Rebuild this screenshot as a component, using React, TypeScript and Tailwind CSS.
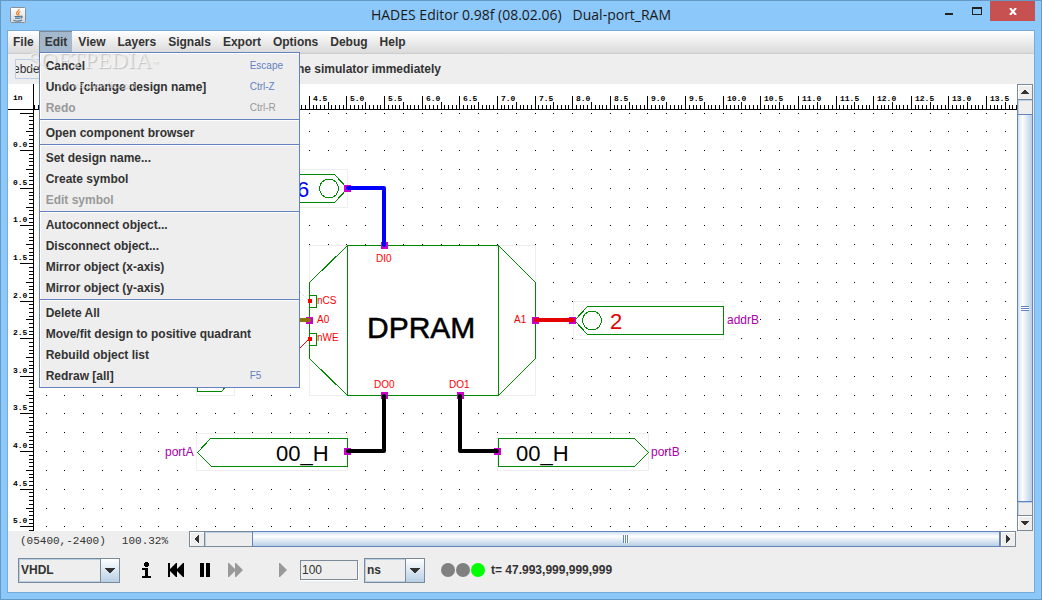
import type { ReactNode } from "react";

const MENUS = ["File", "Edit", "View", "Layers", "Signals", "Export", "Options", "Debug", "Help"];

type Item = { label: string; accel?: string; disabled?: boolean };

const EDIT_GROUPS: Item[][] = [
  [
    { label: "Cancel", accel: "Escape" },
    { label: "Undo [change design name]", accel: "Ctrl-Z" },
    { label: "Redo", accel: "Ctrl-R", disabled: true },
  ],
  [{ label: "Open component browser" }],
  [{ label: "Set design name..." }, { label: "Create symbol" }, { label: "Edit symbol", disabled: true }],
  [
    { label: "Autoconnect object..." },
    { label: "Disconnect object..." },
    { label: "Mirror object (x-axis)" },
    { label: "Mirror object (y-axis)" },
  ],
  [
    { label: "Delete All" },
    { label: "Move/fit design to positive quadrant" },
    { label: "Rebuild object list" },
    { label: "Redraw [all]", accel: "F5" },
  ],
];

/* Pixels per inch of the design, and the pixel of the origin. */
const UNIT = 75.24;
const px = (v: number) => Math.floor(309.35 + (v - 4.5) * UNIT);
const py = (v: number) => Math.floor(150.65 + v * UNIT);

function rulerTicks() {
  let minor = "";
  for (let i = 17; i < 600; i++) {
    const x = px(i / 20) + 0.5;
    if (x < 34) continue;
    minor += `M${x} ${i % 10 === 0 ? 96 : i % 5 === 0 ? 102 : 105}V109`;
  }
  for (let i = -10; i < 400; i++) {
    const y = py(i / 20) + 0.5;
    minor += `M${i % 10 === 0 ? 20 : i % 5 === 0 ? 26 : 29} ${y}H33`;
  }
  return minor;
}

function gridDots() {
  let d = "";
  for (let j = -2; j < 80; j++) for (let i = 4; i < 120; i++) d += `M${px(i / 4)} ${py(j / 4)}h1v1h-1z`;
  return d;
}

const TICKS = rulerTicks();
const DOTS = gridDots();
const H_LABELS = Array.from({ length: 26 }, (_, i) => 1 + i / 2);
const V_LABELS = Array.from({ length: 11 }, (_, i) => i / 2);

function Pin({ x, y }: { x: number; y: number }) {
  return <rect x={x - 3} y={y - 3} width="7" height="7" fill="#cc00cc" />;
}

function Schematic() {
  return (
    <svg className="min-w-0 flex-1 bg-white font-normal" role="img" aria-label="Dual-port_RAM schematic" fontFamily="'Liberation Sans', Arial, sans-serif">
      <g transform="translate(-8 -84)">
        <path d={DOTS} fill="#000" shapeRendering="crispEdges" />
        <path d={TICKS} stroke="#000" shapeRendering="crispEdges" />
        <path d="M8 109.5H3000M33.5 84V3000" stroke="#000" shapeRendering="crispEdges" />
        <g fontFamily="'Liberation Mono', monospace" fontSize="8" fontWeight="700">
          <text x="13" y="100">in</text>
          {H_LABELS.map((v) => (
            <text key={v} x={px(v) + 4} y="101">{v.toFixed(1)}</text>
          ))}
          {V_LABELS.map((v) => (
            <text key={v} x="13" y={py(v) - 3}>{v.toFixed(1)}</text>
          ))}
        </g>

        <g fill="#fff" stroke="#eee" shapeRendering="crispEdges">
          <rect x="196.5" y="169.5" width="151" height="38" />
          <rect x="196.5" y="357.5" width="38" height="38" />
          <rect x="309.5" y="245.5" width="226" height="150" />
          <rect x="573.5" y="301.5" width="150" height="38" />
          <rect x="196.5" y="433.5" width="151" height="37" />
          <rect x="497.5" y="433.5" width="151" height="37" />
        </g>

        <g fill="none" stroke="#008800" shapeRendering="crispEdges">
          <path d="M197.5 174.5H334.5L347.5 188.5L334.5 202.5H197.5z" />
          <path d="M197.5 362.5V391.5H221.5L234.5 376.5L221.5 362.5z" />
          <path d="M347.5 245.5H498.5V395.5H347.5z" />
          <path d="M347.5 245.5L309.5 282.5V358.5L347.5 395.5M498.5 245.5L535.5 282.5V358.5L498.5 395.5" />
          <path d="M309.5 295.5H316.5V307.5H309.5M309.5 333.5H316.5V345.5H309.5" />
          <path d="M574.5 320.5L587.5 306.5H723.5V334.5H587.5z" />
          <path d="M197.5 452.5L210.5 438.5H347.5V466.5H211.5z" />
          <path d="M498.5 438.5H634.5L648.5 452.5L634.5 466.5H498.5z" />
          <circle cx="329" cy="188.5" r="9.5" />
          <circle cx="592" cy="320.5" r="9.5" />
        </g>

        <path d="M299 291L309 301" stroke="#ccc" strokeDasharray="1 1" />
        <path d="M299 349L309 339" stroke="#e60000" shapeRendering="crispEdges" />

        <Pin x={347} y={188} />
        <Pin x={384} y={245} />
        <Pin x={309} y={320} />
        <Pin x={535} y={320} />
        <Pin x={572} y={320} />
        <Pin x={384} y={395} />
        <Pin x={460} y={395} />
        <Pin x={347} y={451} />
        <Pin x={497} y={451} />
        <path d="M308 299h4v4h-4zM308 337h4v4h-4z" fill="#f00" shapeRendering="crispEdges" />

        <g fill="none" strokeWidth="4" strokeLinecap="round" strokeLinejoin="round">
          <path d="M348 188H384V245" stroke="#0000ff" />
          <path d="M280 320H309" stroke="#8f7300" />
          <path d="M536 320H573" stroke="#e60000" />
          <path d="M384 396V451H348M460 396V451H497" stroke="#000" />
        </g>

        <g fill="#f00" fontSize="10">
          <text x="376" y="262">DI0</text>
          <text x="317" y="304">nCS</text>
          <text x="317" y="323">A0</text>
          <text x="317" y="341">nWE</text>
          <text x="514" y="323">A1</text>
          <text x="374" y="388">DO0</text>
          <text x="449" y="388">DO1</text>
        </g>
        <g fill="#aa00aa" fontSize="12">
          <text x="727" y="324">addrB</text>
          <text x="165" y="456">portA</text>
          <text x="651" y="456">portB</text>
        </g>
        <text x="367" y="338" fontSize="30" stroke="#000" strokeWidth="0.500">DPRAM</text>
        <g fontSize="22">
          <text x="297" y="197" fill="#0000ff">6</text>
          <text x="610" y="329" fill="#e60000">2</text>
          <text x="276" y="461">00_H</text>
          <text x="516" y="461">00_H</text>
        </g>
      </g>
    </svg>
  );
}

function JavaIcon() {
  return (
    <svg className="size-4" viewBox="0 0 16 16" aria-hidden="true">
      <defs>
        <linearGradient id="cup" x1="0" y1="0" x2="0" y2="1">
          <stop offset="0" stopColor="#fff" />
          <stop offset="1" stopColor="#d4d8dc" />
        </linearGradient>
      </defs>
      <rect x="0.5" y="0.5" width="15" height="15" rx="1" fill="url(#cup)" stroke="#8b8f94" />
      <path d="M9 2C9.500 4 6 4.500 6.500 6.500C6.700 7.500 7.500 7.500 7.800 8.500M10.500 4.500C8.500 5.200 8.200 6.200 8.800 7C9.300 7.700 8.800 8.200 8.500 8.500" fill="none" stroke="#e8812a" strokeWidth="1.200" />
      <path d="M4.500 9.500H10.500M5 11.200H10M10.500 9.300C12.800 8.500 12.500 11 10.500 11.200M3.500 13.300C6 14.300 10 14.200 12 13" fill="none" stroke="#4d7896" strokeWidth="1.200" />
    </svg>
  );
}

function TitleBar() {
  return (
    <header className="flex h-[29px] shrink-0 items-start">
      <div className="flex w-[135px] pl-[3px] pt-[6px]">
        <JavaIcon />
      </div>
      <h1 className="flex-1 whitespace-pre pt-1 text-center font-['Open_Sans',sans-serif] text-sm font-normal leading-5 text-[#1a1a1a]">
        {"HADES Editor 0.98f (08.02.06)   Dual-port_RAM"}
      </h1>
      <div className="flex w-[135px] justify-end">
        <button type="button" aria-label="Minimize" className="flex h-5 w-[28px] items-start justify-center pt-3">
          <svg className="h-[2px] w-2"><path d="M0 0h8v2H0z" fill="#222" /></svg>
        </button>
        <button type="button" aria-label="Maximize" className="flex h-5 w-[27px] items-start justify-center pt-[6px]">
          <svg className="h-2 w-[10px]" shapeRendering="crispEdges">
            <path d="M0 0h10v8H0zM1 2v5h8V2z" fill="#222" fillRule="evenodd" />
          </svg>
        </button>
        <button type="button" aria-label="Close" className="flex h-5 w-[45px] items-center justify-center bg-[#c75050]">
          <svg className="h-[7px] w-2" viewBox="0 0 8 7"><path d="M1 0L7 7M7 0L1 7" stroke="#fff" strokeWidth="2" /></svg>
        </button>
      </div>
    </header>
  );
}

function EditMenu() {
  return (
    <div role="menu" aria-label="Edit" className="absolute left-0 top-full z-10 w-[261px] border border-[#6382bf] bg-[#eee] pb-px pt-[2px] shadow-[inset_1px_1px_0_#fff]">
      {EDIT_GROUPS.map((group, g) => (
        <div key={g}>
          {g > 0 && (
            <div role="separator" className="py-px">
              <div className="h-[2px] border-t border-[#6382bf] bg-white" />
            </div>
          )}
          {group.map((item) => (
            <button
              key={item.label}
              type="button"
              role="menuitem"
              disabled={item.disabled}
              className="flex h-[21px] w-full items-center justify-between pl-[6px] text-left text-[#333] disabled:text-[#999]"
            >
              <span>{item.label}</span>
              {item.accel && (
                <span className={item.disabled ? "w-[49px] text-[10px] font-normal text-[#999]" : "w-[49px] text-[10px] font-normal text-[#6382bf]"}>
                  {item.accel}
                </span>
              )}
            </button>
          ))}
        </div>
      ))}
    </div>
  );
}

function MenuBar() {
  return (
    <nav className="flex h-[23px] shrink-0 items-start border-b border-[#ccc] bg-linear-to-b from-white to-[#dadada]">
      {MENUS.map((name) => (
        <div key={name} className="relative">
          <button
            type="button"
            className={
              name === "Edit"
                ? "h-[21px] border-l border-t border-[#7a8a99] bg-[#a3b8cc] px-[5px]"
                : name === "File"
                  ? "h-[21px] border-t border-transparent px-[5px]"
                  : "h-[21px] border-t border-transparent px-[6px]"
            }
          >
            {name}
          </button>
          {name === "Edit" && <EditMenu />}
        </div>
      ))}
    </nav>
  );
}

const ARROWS = {
  up: "M4 0h1v1h1v1h1v1h1v1H0V3h1V2h1V1h1V0z",
  down: "M0 0h8v1H7v1H6v1H5v1H3V3H2V2H1V1H0z",
  left: "M3 0h1v8H3V7H2V6H1V5H0V3h1V2h1V1h1z",
  right: "M0 0h1v1h1v1h1v1h1v2H3v1H2v1H1v1H0z",
};

function ArrowButton({ dir }: { dir: keyof typeof ARROWS }) {
  const tall = dir === "left" || dir === "right";
  return (
    <button type="button" aria-label={`Scroll ${dir}`} className="flex size-4 shrink-0 items-center justify-center border border-[#7a8a99] bg-[#eee] shadow-[inset_1px_1px_0_#fff]">
      <svg className={tall ? "h-2 w-1" : "h-1 w-2"} shapeRendering="crispEdges">
        <path d={ARROWS[dir]} fill="#333" />
      </svg>
    </button>
  );
}

function VerticalBar() {
  return (
    <div className="flex w-4 shrink-0 flex-col">
      <ArrowButton dir="up" />
      <div className="flex-[14] border-x border-[#7a8a99] bg-[#eee] shadow-[inset_1px_1px_0_#b8cfe5]" />
      <div className="flex flex-[387] items-center justify-center border border-[#6382bf] bg-linear-to-r from-[#cddeee] via-white via-30% to-[#b8cfe5]">
        <div className="h-[5px] w-2 bg-[repeating-linear-gradient(#6382bf_0_1px,#fff_1px_2px)]" />
      </div>
      <div className="flex-[13] border-x border-[#7a8a99] bg-[#eee] shadow-[inset_1px_1px_0_#b8cfe5]" />
      <ArrowButton dir="down" />
    </div>
  );
}

function HorizontalBar() {
  return (
    <div className="flex h-4 min-w-0 flex-1">
      <ArrowButton dir="left" />
      <div className="flex-[47] border-y border-[#7a8a99] bg-[#eee] shadow-[inset_1px_1px_0_#b8cfe5]" />
      <div className="flex flex-[749] items-center justify-center border border-[#6382bf] bg-linear-to-b from-[#cddeee] via-white via-30% to-[#b8cfe5]">
        <div className="h-2 w-[6px] bg-[repeating-linear-gradient(90deg,#6382bf_0_1px,#fff_1px_2px)]" />
      </div>
      <ArrowButton dir="right" />
    </div>
  );
}

function Combo({ label, value, width }: { label: string; value: string; width: string }) {
  return (
    <div className={`relative h-[25px] ${width}`}>
      <select aria-label={label} defaultValue={value} className="size-full appearance-none border border-[#7a8a99] bg-[#eee] pl-[2px] font-bold text-[#333] shadow-[inset_0_0_0_1px_#b8cfe5]">
        <option>{value}</option>
      </select>
      <span className="pointer-events-none absolute inset-y-0 right-0 flex w-5 items-center justify-center border border-[#7a8a99] bg-linear-to-b from-white to-[#b8cfe5]">
        <svg className="h-[5px] w-[10px]" shapeRendering="crispEdges">
          <path d="M0 0h10v1H9v1H8v1H7v1H6v1H4V4H3V3H2V2H1V1H0z" fill="#333" />
        </svg>
      </span>
    </div>
  );
}

function Tool({ label, disabled, children }: { label: string; disabled?: boolean; children: ReactNode }) {
  return (
    <button type="button" aria-label={label} disabled={disabled} className="flex h-6 w-[30px] items-center justify-center text-black disabled:text-[#999]">
      <svg className="h-4 w-5" viewBox="0 0 20 16" fill="currentColor">{children}</svg>
    </button>
  );
}

function ControlBar() {
  return (
    <footer className="flex h-11 shrink-0 items-center pl-[10px]">
      <Combo label="Language" value="VHDL" width="w-[102px]" />
      <div className="ml-[11px] flex">
        <Tool label="Info">
          <path d="M9 0h3v1h1v3h-1v1H9V4H8V1h1zM6 6h6v8h3v2H6v-2h3V8H6z" />
        </Tool>
        <Tool label="Rewind">
          <path d="M2 1h2v6l6-6h1v6l6-6h1v14h-1l-6-6v6h-1L4 9v6H2z" />
        </Tool>
        <Tool label="Pause">
          <path d="M4 1h4v14H4zM10 1h4v14h-4z" />
        </Tool>
        <Tool label="Fast forward" disabled>
          <path d="M2 1h1l6 6V1h1l7 7-7 7H9V9l-6 6H2z" />
        </Tool>
      </div>
      <div className="ml-[17px] flex">
        <Tool label="Play" disabled>
          <path d="M6 1h1l7 7-7 7H6z" />
        </Tool>
      </div>
      <input aria-label="Time step" defaultValue="100" className="ml-[2px] h-5 w-[58px] border border-[#7a8a99] bg-[#eee] pl-[1px] font-normal text-[#333] shadow-[1px_1px_0_#fff]" />
      <div className="ml-[6px]">
        <Combo label="Time unit" value="ns" width="w-[61px]" />
      </div>
      <svg className="ml-4 h-4 w-[45px]" aria-label="Simulator status" role="img">
        <circle cx="7" cy="8" r="7" fill="#808080" />
        <circle cx="22" cy="8" r="7" fill="#808080" />
        <circle cx="37" cy="8" r="7" fill="#00ff00" />
      </svg>
      <output className="ml-[5px]">t= 47.993,999,999,999</output>
    </footer>
  );
}

export default function App() {
  return (
    <div className="flex min-h-screen flex-col border border-[#6699c4] bg-[#8dc8fa] px-[6px] pb-[6px] font-['Liberation_Sans',Arial,sans-serif] text-xs font-bold text-[#333]">
      <TitleBar />
      <main className="relative flex flex-1 flex-col border border-[#79abd9] bg-[#eee]">
        <MenuBar />
        <div className="flex h-[30px] shrink-0 items-center pl-[7px]">
          <input aria-label="Hint" defaultValue="ebde" className="h-5 w-[270px] border border-[#b8cfe5] bg-[#eee] -indent-[3px] font-normal text-[#333]" />
          <p className="pl-2">the simulator immediately</p>
        </div>
        <div className="flex min-h-0 flex-1 pr-px">
          <Schematic />
          <VerticalBar />
        </div>
        <div className="flex h-[17px] shrink-0 pr-[18px]">
          <p className="flex w-[181px] shrink-0 items-center gap-4 pl-3 pt-1 font-['Liberation_Mono',monospace] text-[11px] font-normal">
            <span>(05400,-2400)</span>
            <span>100.32%</span>
          </p>
          <HorizontalBar />
        </div>
        <ControlBar />
        <div className="pointer-events-none absolute left-5 top-[18px] z-20 font-['Liberation_Serif',serif] font-normal text-white/60 [text-shadow:1px_1px_1px_#0003]">
          <p className="text-[23px] leading-6">
            SOFTPEDIA<sup className="text-[6px]">™</sup>
          </p>
          <p className="pl-7 text-[10px] leading-6">www.softpedia.com</p>
        </div>
      </main>
    </div>
  );
}
